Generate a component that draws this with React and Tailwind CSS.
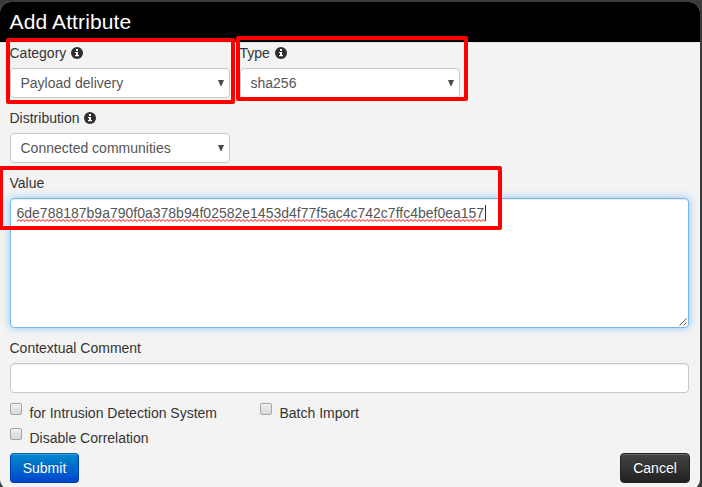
import React from "react";

function InfoIcon() {
  return (
    <svg className="ml-[4.7px] mt-1 h-3 w-3 shrink-0" viewBox="0 0 12 12" aria-hidden="true">
      <circle cx="6" cy="6" r="6" fill="#2f2f2f" />
      <path d="M5 2h2v2H5zM4 5h3v3h1v1.3H4V8h1V6H4z" fill="#fff" />
    </svg>
  );
}

function Label({ children, info }) {
  return (
    <div className="flex h-5 text-[#333333]">
      {children}
      {info && <InfoIcon />}
    </div>
  );
}

function Select({ label, value }) {
  return (
    <div className="w-[220px]">
      <Label info>{label}</Label>
      <div className="mt-[5px] flex h-[30px] items-center justify-between rounded-[4px] border border-[#c8c8c8] bg-white pr-[5px] pl-[10px] text-[#555555]">
        <span>{value}</span>
        <svg className="h-[6px] w-[6px]" viewBox="0 0 6 6" aria-hidden="true">
          <path d="M0 0h6L3.4 6h-.8z" fill="#484848" />
        </svg>
      </div>
    </div>
  );
}

function Checkbox({ children, className = "" }) {
  return (
    <label className={`flex h-5 ${className}`}>
      <span className="mr-2 h-3 w-3 shrink-0 rounded-[2px] border border-[#a4a4a4] bg-linear-to-b from-[#eeeeee] to-[#dadada] shadow-[inset_0_1px_0_#f4f4f4]" />
      {children}
    </label>
  );
}

function Squiggle() {
  return (
    <svg className="absolute top-[14px] left-0 h-[3px] w-full" aria-hidden="true">
      <defs>
        <pattern id="squiggle" width="4" height="3" patternUnits="userSpaceOnUse">
          <path d="M-1 1.5L0 2.5L2 .5L4 2.5L5 1.5" fill="none" stroke="#f00" strokeWidth="1" />
        </pattern>
      </defs>
      <rect width="100%" height="3" fill="url(#squiggle)" />
    </svg>
  );
}

export default function App() {
  return (
    <div className="relative h-[487px] w-[702px] overflow-hidden bg-[#3b3b3b] pt-[2px] indent-[-0.5px] font-['Liberation_Sans',Arial,sans-serif] text-[14px] leading-5 text-[#333333]">
      <div className="h-[488px] w-[700px] overflow-hidden rounded-[11px] bg-[#f3f3f3]">
        <h1 className="h-10 bg-black pl-[10px] text-[21px] leading-10 tracking-[0.12px] text-white">Add Attribute</h1>
        <div className="border-t border-[#e5e5e5] pr-[11px] pl-[10px]">
          <div className="flex gap-[10px]">
            <Select label="Category" value="Payload delivery" />
            <Select label="Type" value="sha256" />
          </div>
          <div className="mt-[10px]">
            <Select label="Distribution" value="Connected communities" />
          </div>
          <div className="mt-[10px]">
            <Label>Value</Label>
            <div className="relative mt-[5px] h-[130px] rounded-[4px] border border-[#75b9f0] bg-white px-[6px] py-[6px] text-[#555555] shadow-[inset_0_1px_1px_rgba(0,0,0,0.075),0_0_8px_rgba(82,168,236,0.6)]">
              <span className="relative block h-4 w-fit border-r border-[#333333] pr-px leading-4">
                6de788187b9a790f0a378b94f02582e1453d4f77f5ac4c742c7ffc4bef0ea157
                <Squiggle />
              </span>
              <svg className="absolute right-[1px] bottom-[1px] h-2 w-2" viewBox="0 0 8 8" aria-hidden="true">
                <path d="M.5 7.5l7-7M4.5 7.5l3-3" stroke="#555" fill="none" />
              </svg>
            </div>
          </div>
          <div className="mt-[10px]">
            <Label>Contextual Comment</Label>
            <div className="mt-[5px] h-[30px] rounded-[4px] border border-[#c8c8c8] bg-white shadow-[inset_0_1px_1px_rgba(0,0,0,0.075)]" />
          </div>
          <div className="mt-[10px] flex">
            <Checkbox className="w-[250px]">for Intrusion Detection System</Checkbox>
            <Checkbox>Batch Import</Checkbox>
          </div>
          <Checkbox className="mt-[5px]">Disable Correlation</Checkbox>
          <div className="mt-[5px] -mr-px flex justify-between">
            <button className="h-[30px] w-[69px] rounded-[4px] border border-[#003fb0] border-t-[#0068b0] bg-linear-to-b from-[#0088cc] to-[#0044cc] text-white shadow-[inset_0_1px_0_rgba(255,255,255,0.2)] [text-shadow:0_-1px_0_rgba(0,0,0,0.25)]">Submit</button>
            <button className="h-[30px] w-[70px] rounded-[4px] border border-[#222222] bg-linear-to-b from-[#444444] to-[#222222] text-white shadow-[inset_0_1px_0_rgba(255,255,255,0.2)] [text-shadow:0_-1px_0_rgba(0,0,0,0.25)]">Cancel</button>
          </div>
        </div>
      </div>
      <div className="absolute top-[38px] left-[6px] h-[66px] w-[229px] rounded-[2px] border-4 border-[#ff0000]" />
      <div className="absolute top-[36px] left-[236px] h-[65px] w-[232px] rounded-[2px] border-4 border-[#ff0000]" />
      <div className="absolute top-[166px] -left-px h-[64px] w-[503px] rounded-[2px] border-4 border-[#ff0000]" />
    </div>
  );
}
